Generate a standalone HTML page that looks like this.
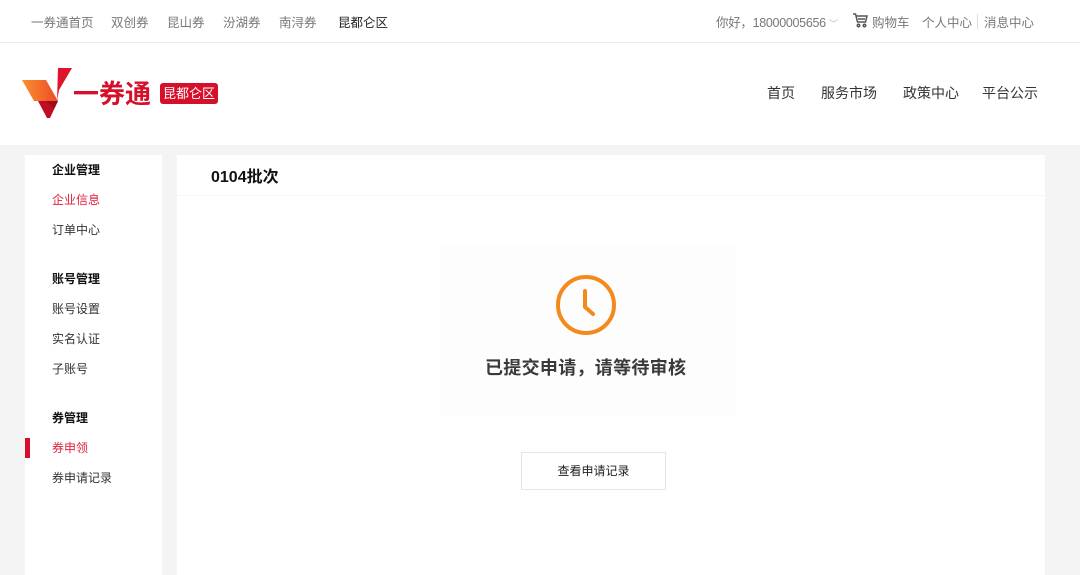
<!DOCTYPE html>
<html><head><meta charset="utf-8"><style>
*{margin:0;padding:0;box-sizing:border-box}
body{width:1080px;height:564px;overflow:hidden;background:#f4f4f4;font-family:"Liberation Sans","Noto Sans CJK SC",sans-serif;position:relative}
.a{position:absolute;white-space:nowrap}
.top{position:absolute;left:0;top:0;width:1080px;height:43px;background:#fff;border-bottom:1px solid #ececec}
.top .a{font-size:12.5px;color:#777;top:12px}
.hdr{position:absolute;left:0;top:43px;width:1080px;height:102px;background:#fff}
.nav{font-size:14px;color:#333}
.side{position:absolute;left:25px;top:155px;width:137px;height:420px;background:#fff}
.side .a{font-size:12px;color:#333;left:27px}
.side .h{font-weight:bold;color:#111}
.main{position:absolute;left:177px;top:155px;width:868px;height:420px;background:#fff}
</style></head><body>
<div class="top">
<span class="a" style="left:31px">一券通首页</span>
<span class="a" style="left:111px">双创券</span>
<span class="a" style="left:167px">昆山券</span>
<span class="a" style="left:223px">汾湖券</span>
<span class="a" style="left:279px">南浔券</span>
<span class="a" style="left:338px;color:#222">昆都仑区</span>
<span class="a" style="left:716px;font-size:12.5px;letter-spacing:-0.3px">你好，18000005656 <span style="font-size:9px;color:#bbb">﹀</span></span>
<svg class="a" style="left:852px;top:12px" width="16" height="16" viewBox="0 0 16 16" fill="none" stroke="#555" stroke-width="1.5"><path d="M1 2h2.5l2 8h8l1.5-6H4.5M6 7h7"/><circle cx="6.5" cy="13.5" r="1.2"/><circle cx="12.5" cy="13.5" r="1.2"/></svg>
<span class="a" style="left:872px">购物车</span>
<span class="a" style="left:922px">个人中心</span>
<span class="a" style="left:977px;top:14px;width:1px;height:15px;background:#ddd"></span>
<span class="a" style="left:984px">消息中心</span>
</div>
<div class="hdr">
<svg class="a" style="left:22px;top:25px" width="52" height="50" viewBox="0 0 52 50"><defs><linearGradient id="g" x1="0" x2="1"><stop offset="0" stop-color="#f8902f"/><stop offset="1" stop-color="#ee4a26"/></linearGradient></defs><path d="M36 0h14L37 22 35 33z" fill="#e0132b"/><path d="M0 12h24l12 21H12z" fill="url(#g)"/><path d="M16 33h20l-8 17h-3z" fill="#c10d24"/><path d="M24 33h12l-4 8z" fill="#9a0c1c"/></svg>
<span class="a" style="left:73px;top:31px;font-size:26px;font-weight:bold;color:#d6102a;letter-spacing:0px">一券通</span>
<span class="a" style="left:160px;top:40px;width:58px;height:21px;background:#d6102a;border-radius:3px;color:#fff;font-size:13px;line-height:21px;text-align:center">昆都仑区</span>
<span class="a nav" style="left:767px;top:40px">首页</span>
<span class="a nav" style="left:821px;top:40px">服务市场</span>
<span class="a nav" style="left:903px;top:40px">政策中心</span>
<span class="a nav" style="left:982px;top:40px">平台公示</span>
</div>
<div class="side">
<span class="a h" style="top:6px">企业管理</span>
<span class="a" style="top:36px;color:#e0213d">企业信息</span>
<span class="a" style="top:66px">订单中心</span>
<span class="a h" style="top:115px">账号管理</span>
<span class="a" style="top:145px">账号设置</span>
<span class="a" style="top:175px">实名认证</span>
<span class="a" style="top:205px">子账号</span>
<span class="a h" style="top:254px">券管理</span>
<span class="a" style="left:0;top:283px;width:5px;height:20px;background:#d6102a"></span>
<span class="a" style="top:284px;color:#e0213d">券申领</span>
<span class="a" style="top:314px">券申请记录</span>
</div>
<div class="main">
<div class="a" style="left:0;top:40px;width:868px;height:1px;background:#f6f6f6"></div>
<span class="a" style="left:34px;top:8px;font-size:16px;font-weight:bold;color:#111">0104批次</span>
<div class="a" style="left:263px;top:88px;width:296px;height:172px;background:#fdfdfd"></div>
<svg class="a" style="left:377px;top:118px" width="64" height="64" viewBox="0 0 64 64" fill="none" stroke="#f38a1c" stroke-width="4"><circle cx="32" cy="32" r="28"/><path d="M31 18v16l8 7" stroke-linecap="round"/></svg>
<span class="a" style="left:308px;top:199px;font-size:18px;font-weight:bold;color:#3a3a3a;letter-spacing:0.3px">已提交申请，请等待审核</span>
<span class="a" style="left:344px;top:297px;width:145px;height:38px;border:1px solid #e4e4ee;font-size:12px;color:#222;text-align:center;line-height:36px">查看申请记录</span>
</div>
</body></html>
